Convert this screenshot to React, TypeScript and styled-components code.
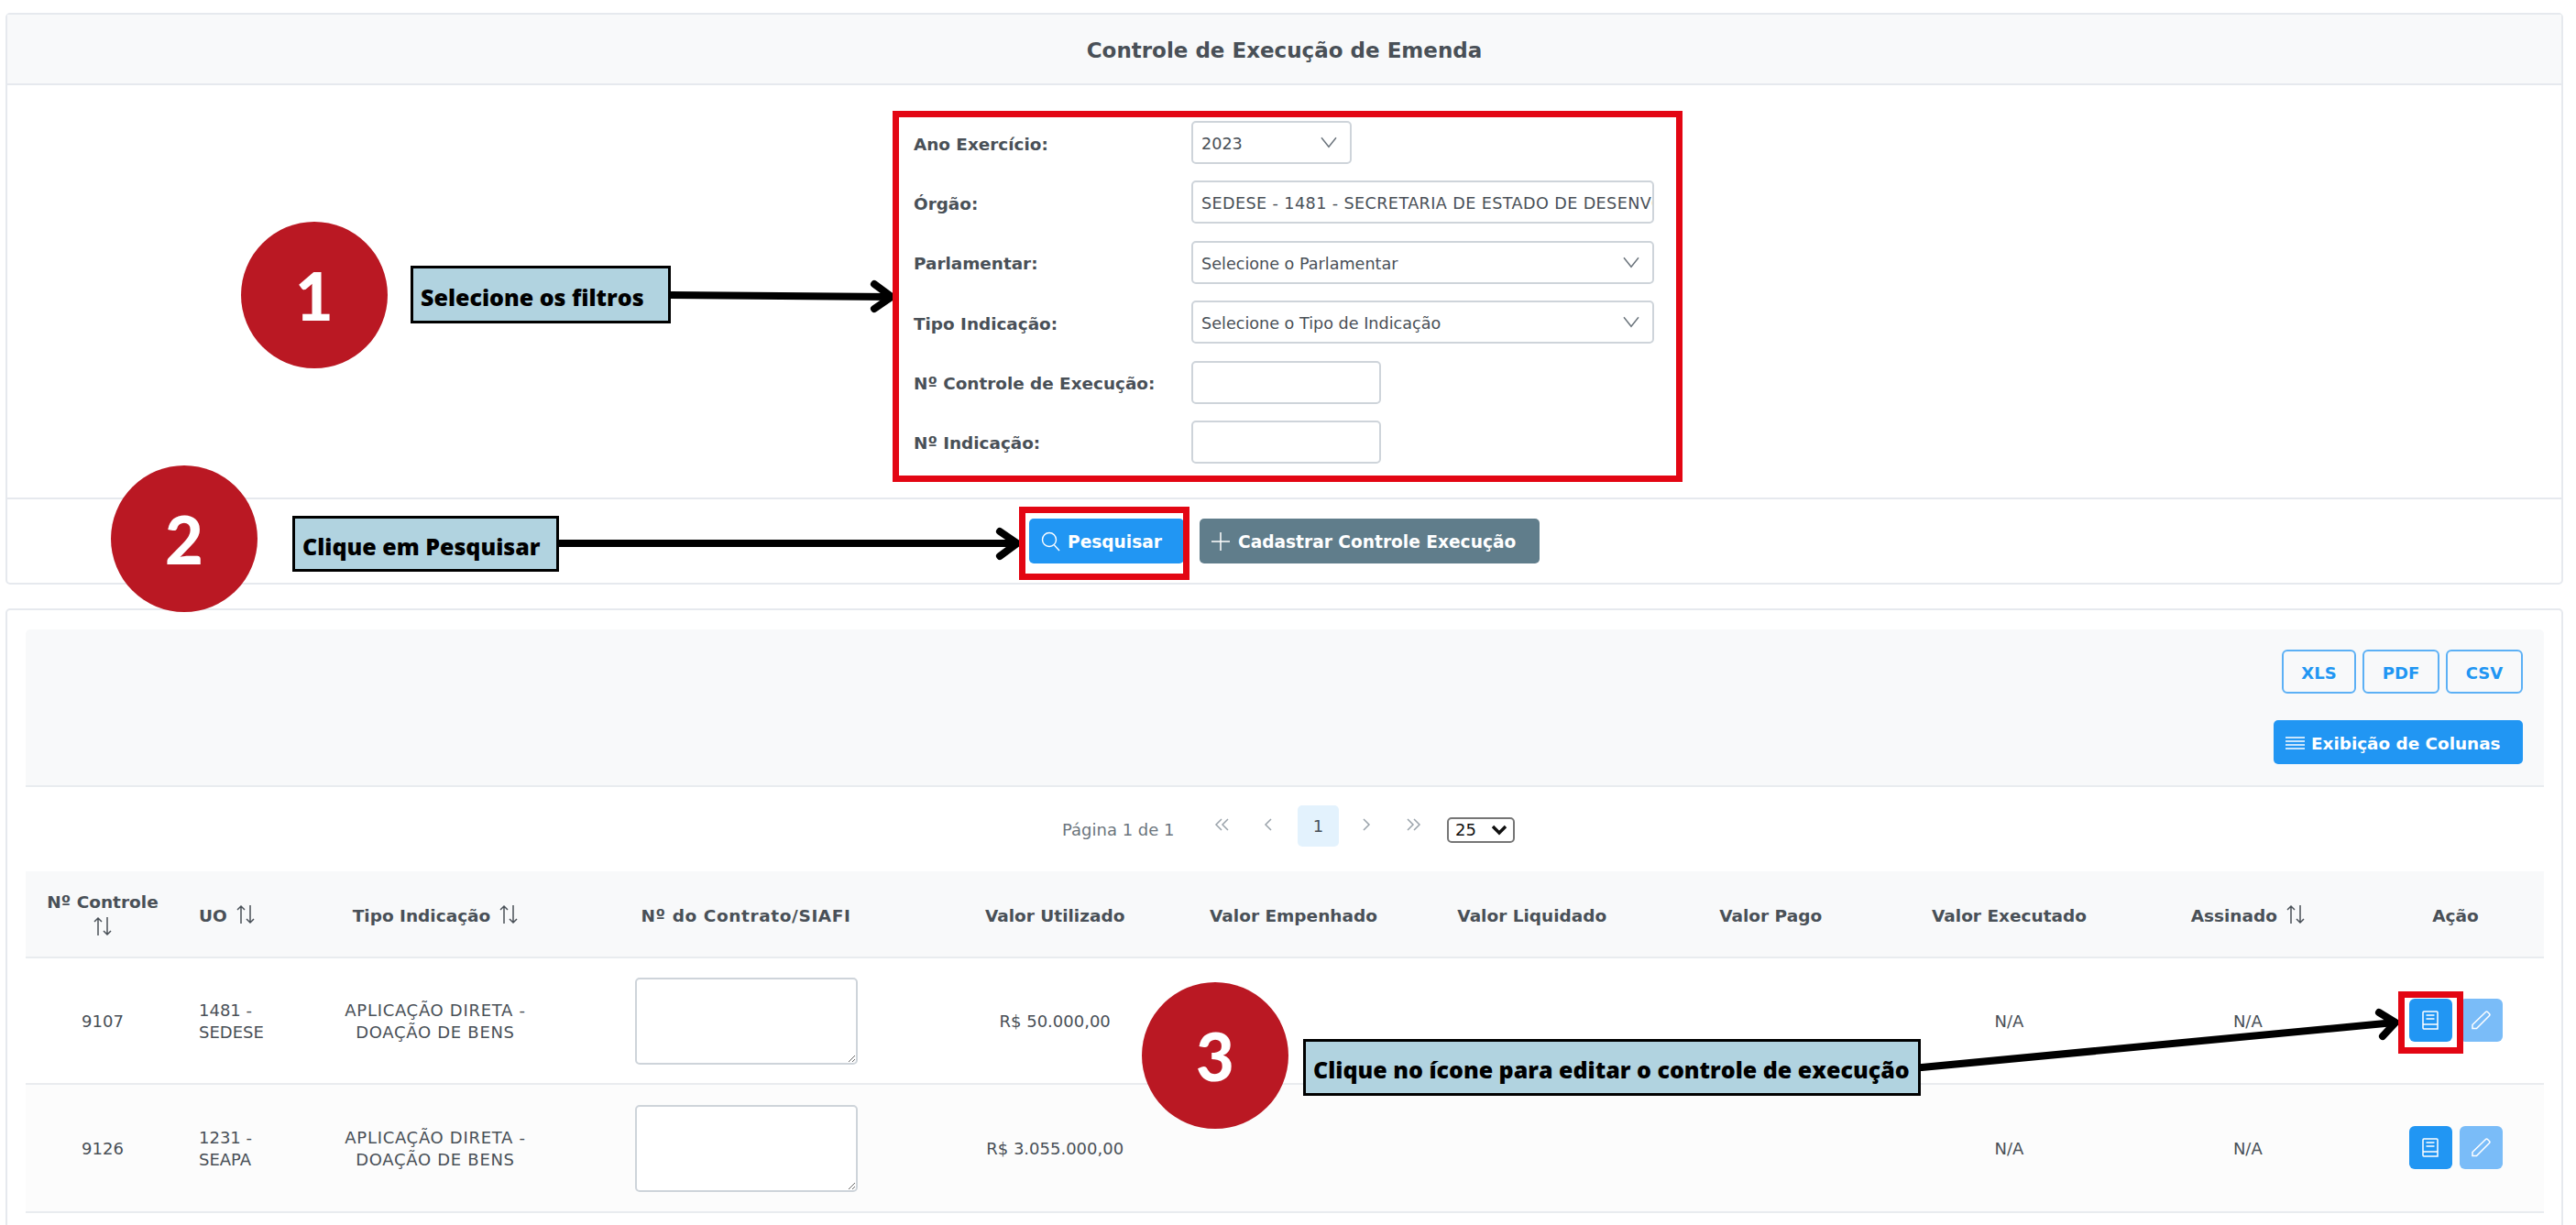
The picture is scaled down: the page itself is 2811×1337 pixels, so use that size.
import React from 'react'
import styled, { createGlobalStyle } from 'styled-components'

const GlobalStyle = createGlobalStyle`
  html, body { margin: 0; padding: 0; background: #fff; }
  * { box-sizing: border-box; }
`

const COLUMNS = '168px 147px 264px 414px repeat(6, 260.33px) 193px'
const UI_FONT = '"DejaVu Sans", Verdana, sans-serif'
const NOTE_FONT = '"Open Sans", "Liberation Sans", sans-serif'

const filters = [
  { label: 'Ano Exercício:', value: '2023', width: 175, chevron: true, wide: false },
  { label: 'Órgão:', value: 'SEDESE - 1481 - SECRETARIA DE ESTADO DE DESENVOLVIMENTO SOCIAL', width: 505, chevron: false, wide: true },
  { label: 'Parlamentar:', value: 'Selecione o Parlamentar', width: 505, chevron: true, wide: false },
  { label: 'Tipo Indicação:', value: 'Selecione o Tipo de Indicação', width: 505, chevron: true, wide: false },
  { label: 'Nº Controle de Execução:', value: '', width: 207, chevron: false, wide: false },
  { label: 'Nº Indicação:', value: '', width: 207, chevron: false, wide: false },
]

const rows = [
  { id: '9107', uo: ['1481 -', 'SEDESE'], valor: 'R$ 50.000,00', height: 138, striped: false },
  { id: '9126', uo: ['1231 -', 'SEAPA'], valor: 'R$ 3.055.000,00', height: 140, striped: true },
]

const ChevronDown = ({ size = 18 }: { size?: number }) => (
  <svg width={size} height={size * 0.7} viewBox="0 0 18 12" fill="none" stroke="#6c757d" strokeWidth="1.5">
    <path d="M1 1l8 10 8-10" />
  </svg>
)

const SearchIcon = () => (
  <svg width="21" height="22" viewBox="0 0 21 22" fill="none" stroke="#fff" strokeWidth="1.4">
    <circle cx="9" cy="9" r="7.5" />
    <path d="M14.5 15l5.5 6" />
  </svg>
)

const PlusIcon = () => (
  <svg width="22" height="22" viewBox="0 0 22 22" stroke="#fff" strokeWidth="1.5">
    <path d="M11 1v20M1 11h20" />
  </svg>
)

const BarsIcon = () => (
  <svg width="21" height="16" viewBox="0 0 21 16" stroke="#fff" strokeWidth="1.5">
    <path d="M0 2h21M0 6h21M0 10h21M0 14h21" />
  </svg>
)

const BookIcon = () => (
  <svg width="18" height="21" viewBox="0 0 18 21" fill="none" stroke="#fff" strokeWidth="1.5">
    <path d="M1 15V2q0-1 1-1h14q1 0 1 1v18H2q-1 0-1-1z" />
    <path d="M1 15h16M4.5 5h9M4.5 9h9" />
  </svg>
)

const PencilIcon = () => (
  <svg width="21" height="21" viewBox="0 0 21 21" fill="none" stroke="#fff" strokeWidth="1.5">
    <path d="M1 15.5L15.5 1.5q1-1 2 0l2 2q1 1 0 2L5.5 19.5H1z" />
  </svg>
)

const SortIcon = () => (
  <SortGlyph width="20" height="22" viewBox="0 0 20 22" fill="none" stroke="#495057" strokeWidth="1.5">
    <path d="M5 21V2M1 6l4-4 4 4M15 1v19M11 16l4 4 4-4" />
  </SortGlyph>
)

const PagerArrow = ({ d }: { d: string }) => (
  <svg width="20" height="14" viewBox="0 0 20 14" fill="none" stroke="#9aa3ab" strokeWidth="1.5">
    <path d={d} />
  </svg>
)

const App = () => {
  return (
    <Page>
      <GlobalStyle />

      <Card>
        <CardTitle>Controle de Execução de Emenda</CardTitle>
        <FilterGrid>
          {filters.map((f) => (
            <React.Fragment key={f.label}>
              <FilterLabel>{f.label}</FilterLabel>
              <Field $width={f.width}>
                <FieldText $wide={f.wide}>{f.value}</FieldText>
                {f.chevron && <ChevronDown />}
              </Field>
            </React.Fragment>
          ))}
        </FilterGrid>
        <CardFooter>
          <Button $bg="#2196f3" $width={169} $pad={13}><SearchIcon />Pesquisar</Button>
          <Button $bg="#607d8b" $width={371} $pad={12}><PlusIcon />Cadastrar Controle Execução</Button>
        </CardFooter>
      </Card>

      <TableCard>
        <Toolbar>
          <ExportRow>
            <OutlineButton $width={81}>XLS</OutlineButton>
            <OutlineButton $width={84}>PDF</OutlineButton>
            <OutlineButton $width={84}>CSV</OutlineButton>
          </ExportRow>
          <ColumnsButton><BarsIcon />Exibição de Colunas</ColumnsButton>
        </Toolbar>

        <Pager>
          <PageInfo>Página 1 de 1</PageInfo>
          <PagerIcon $width={50}><PagerArrow d="M9 1L3 7l6 6M16 1l-6 6 6 6" /></PagerIcon>
          <PagerIcon $width={50}><PagerArrow d="M13 1L7 7l6 6" /></PagerIcon>
          <PageCurrent>1</PageCurrent>
          <PagerIcon $width={60}><PagerArrow d="M7 1l6 6-6 6" /></PagerIcon>
          <PagerIcon $width={42}><PagerArrow d="M4 1l6 6-6 6M11 1l6 6-6 6" /></PagerIcon>
          <PageSize>25<ChevronBold width="18" height="12" viewBox="0 0 18 12" fill="none" stroke="#111" strokeWidth="3.4"><path d="M2 2l7 7 7-7" /></ChevronBold></PageSize>
        </Pager>

        <HeadRow>
          <HeadCell><span>Nº Controle</span><SortIcon /></HeadCell>
          <HeadCell $row $start><span>UO</span><SortIcon /></HeadCell>
          <HeadCell $row><span>Tipo Indicação</span><SortIcon /></HeadCell>
          <HeadCell $wide>Nº do Contrato/SIAFI</HeadCell>
          <HeadCell>Valor Utilizado</HeadCell>
          <HeadCell>Valor Empenhado</HeadCell>
          <HeadCell>Valor Liquidado</HeadCell>
          <HeadCell>Valor Pago</HeadCell>
          <HeadCell>Valor Executado</HeadCell>
          <HeadCell $row><span>Assinado</span><SortIcon /></HeadCell>
          <HeadCell>Ação</HeadCell>
        </HeadRow>

        {rows.map((r) => (
          <BodyRow key={r.id} $height={r.height} $striped={r.striped}>
            <Cell>{r.id}</Cell>
            <Cell $left>{r.uo[0]}<br />{r.uo[1]}</Cell>
            <Cell $wide>APLICAÇÃO DIRETA -<br />DOAÇÃO DE BENS</Cell>
            <AreaCell><ContractArea /></AreaCell>
            <Cell>{r.valor}</Cell>
            <Cell />
            <Cell />
            <Cell />
            <Cell>N/A</Cell>
            <Cell>N/A</Cell>
            <ActionCell>
              <ActionButton $muted={false}><BookIcon /></ActionButton>
              <ActionButton $muted><PencilIcon /></ActionButton>
            </ActionCell>
          </BodyRow>
        ))}
      </TableCard>

      {/* tutorial marks drawn over the screen */}
      <ArrowLayer width="2811" height="1337" viewBox="0 0 2811 1337" fill="none" stroke="#000" strokeLinecap="round" strokeLinejoin="round">
        <path strokeWidth="8" d="M732 322L972 324" />
        <path strokeWidth="8" d="M954 310L973 324 954 337" />
        <path strokeWidth="8" d="M610 593H1108" />
        <path strokeWidth="8" d="M1091 580L1110 593 1091 607" />
        <path strokeWidth="8" d="M2097 1165L2613 1116" />
        <path strokeWidth="8" d="M2596 1105L2614 1116 2600 1131" />
      </ArrowLayer>

      <RedFrame $x={974} $y={121} $w={862} $h={405} />
      <RedFrame $x={1112} $y={553} $w={186} $h={80} />
      <RedFrame $x={2617} $y={1082} $w={71} $h={68} />

      <StepBadge $x={263} $y={242}>1</StepBadge>
      <StepBadge $x={121} $y={508}>2</StepBadge>
      <StepBadge $x={1246} $y={1072}>3</StepBadge>

      <NoteBox $x={448} $y={290} $w={284} $h={63}>Selecione os filtros</NoteBox>
      <NoteBox $x={319} $y={563} $w={291} $h={61}>Clique em Pesquisar</NoteBox>
      <NoteBox $x={1422} $y={1134} $w={674} $h={62}>Clique no ícone para editar o controle de execução</NoteBox>
    </Page>
  )
}

export default App

const Page = styled.div`
  position: relative;
  width: 2811px;
  height: 1337px;
  overflow: hidden;
  padding: 14px 14px 0 6px;
  font-family: ${UI_FONT};
  color: #495057;
`
const Card = styled.section`
  height: 624px;
  border: 2px solid #e6e9ee;
  border-radius: 5px;
  display: flex;
  flex-direction: column;
`
const CardTitle = styled.h1`
  height: 77px;
  margin: 0;
  padding-top: 2px;
  flex: none;
  background: #f8f9fa;
  border-bottom: 2px solid #e6e9ee;
  display: flex;
  align-items: center;
  justify-content: center;
  font-size: 23px;
  font-weight: 700;
  color: #495057;
`
const FilterGrid = styled.div`
  flex: 1;
  display: grid;
  grid-template-columns: 303px 505px;
  grid-auto-rows: 47px;
  row-gap: 18.4px;
  justify-content: center;
  align-items: center;
  padding: 39px 1px 0 0;
`
const FilterLabel = styled.label`
  font-size: 18.4px;
  font-weight: 700;
  padding-top: 3px;
  color: #495057;
`
const Field = styled.div<{ $width: number }>`
  width: ${(p) => p.$width}px;
  height: 47px;
  border: 2px solid #ced4da;
  border-radius: 5px;
  background: #fff;
  display: flex;
  align-items: center;
  justify-content: space-between;
  padding: 0 14px 0 9px;
  gap: 8px;
  overflow: hidden;
`
const FieldText = styled.span<{ $wide: boolean }>`
  font-size: 17.6px;
  letter-spacing: ${(p) => (p.$wide ? '0.4px' : '0')};
  padding-top: 3px;
  color: #495057;
  white-space: nowrap;
  overflow: hidden;
  flex: 1;
  margin-right: -14px;
`
const CardFooter = styled.div`
  height: 93px;
  flex: none;
  border-top: 2px solid #e6e9ee;
  display: flex;
  align-items: center;
  justify-content: center;
  gap: 17px;
  padding-bottom: 1px;
`
const Button = styled.div<{ $bg: string; $width: number; $pad: number }>`
  width: ${(p) => p.$width}px;
  height: 49px;
  border-radius: 5px;
  background: ${(p) => p.$bg};
  color: #fff;
  font-size: 18.6px;
  font-weight: 700;
  display: flex;
  align-items: center;
  padding: 2px 0 0 ${(p) => p.$pad}px;
  gap: 8px;
  white-space: nowrap;
`
const TableCard = styled.section`
  margin-top: 26px;
  height: 700px;
  border: 2px solid #e6e9ee;
  border-radius: 5px;
  padding: 21px 19px 0 20px;
`
const Toolbar = styled.div`
  height: 172px;
  background: #f8f9fa;
  border-bottom: 2px solid #e9ecef;
  border-radius: 5px 5px 0 0;
  display: flex;
  flex-direction: column;
  align-items: flex-end;
  padding: 22px 23px 0 0;
  gap: 29px;
`
const ExportRow = styled.div`
  display: flex;
  gap: 7px;
`
const OutlineButton = styled.div<{ $width: number }>`
  width: ${(p) => p.$width}px;
  height: 48px;
  padding-top: 2px;
  border: 2px solid #5cb0f5;
  border-radius: 6px;
  color: #2196f3;
  font-size: 18px;
  font-weight: 700;
  display: flex;
  align-items: center;
  justify-content: center;
`
const ColumnsButton = styled.div`
  width: 272px;
  height: 48px;
  border-radius: 5px;
  background: #2196f3;
  color: #fff;
  font-size: 18.4px;
  font-weight: 700;
  display: flex;
  align-items: center;
  padding: 2px 0 0 13px;
  gap: 7px;
  white-space: nowrap;
`
const Pager = styled.div`
  height: 92px;
  display: flex;
  align-items: center;
  padding: 0 0 8px 1131px;
`
const PageInfo = styled.span`
  font-size: 18px;
  color: #6c757d;
  width: 150px;
  white-space: nowrap;
  padding-top: 9px;
`
const PagerIcon = styled.span<{ $width: number }>`
  width: ${(p) => p.$width}px;
  display: flex;
  justify-content: center;
  padding-bottom: 2px;
`
const PageCurrent = styled.span`
  width: 45px;
  height: 45px;
  margin-left: 7px;
  border-radius: 5px;
  background: #e3f2fd;
  color: #495057;
  font-size: 18px;
  display: flex;
  align-items: center;
  justify-content: center;
`
const PageSize = styled.span`
  width: 74px;
  height: 28px;
  margin: 9px 0 0 16px;
  border: 2px solid #767676;
  border-radius: 5px;
  color: #111;
  font-size: 18px;
  display: flex;
  align-items: center;
  justify-content: space-between;
  padding: 0 6px 0 7px;
`
const ChevronBold = styled.svg`
  flex: none;
`
const HeadRow = styled.div`
  display: grid;
  grid-template-columns: ${COLUMNS};
  height: 95px;
  background: #f8f9fa;
  border-bottom: 2px solid #e9ecef;
`
const HeadCell = styled.div<{ $row?: boolean; $start?: boolean; $wide?: boolean }>`
  display: flex;
  flex-direction: ${(p) => (p.$row ? 'row' : 'column')};
  align-items: center;
  justify-content: ${(p) => (p.$start ? 'flex-start' : 'center')};
  padding: ${(p) => (p.$start ? '4px 0 0 21px' : '4px 0 0')};
  gap: ${(p) => (p.$row ? '10px' : '5px')};
  font-size: 18.5px;
  letter-spacing: ${(p) => (p.$wide ? '0.6px' : '0')};
  font-weight: 700;
  text-align: center;
  color: #495057;
  white-space: nowrap;
`
const SortGlyph = styled.svg`
  flex: none;
  margin-bottom: 3px;
`
const BodyRow = styled.div<{ $height: number; $striped: boolean }>`
  display: grid;
  grid-template-columns: ${COLUMNS};
  height: ${(p) => p.$height}px;
  background: ${(p) => (p.$striped ? '#fcfcfc' : '#fff')};
  border-bottom: 2px solid #e9ecef;
`
const Cell = styled.div<{ $left?: boolean; $wide?: boolean }>`
  display: flex;
  align-items: center;
  justify-content: ${(p) => (p.$left ? 'flex-start' : 'center')};
  text-align: ${(p) => (p.$left ? 'left' : 'center')};
  padding: 2px 0 0 ${(p) => (p.$left ? '21px' : '0')};
  font-size: 18px;
  letter-spacing: ${(p) => (p.$wide ? '0.7px' : '0')};
  line-height: 24px;
  color: #495057;
`
const AreaCell = styled.div`
  display: flex;
  align-items: center;
  justify-content: center;
`
const ContractArea = styled.textarea`
  width: 243px;
  height: 95px;
  border: 2px solid #ced4da;
  border-radius: 5px;
  background: #fff;
  resize: both;
  outline: none;
`
const ActionCell = styled.div`
  display: flex;
  align-items: center;
  gap: 8px;
  padding: 0 0 2px 46px;
`
const ActionButton = styled.div<{ $muted: boolean }>`
  width: 47px;
  height: 47px;
  border-radius: 6px;
  background: ${(p) => (p.$muted ? '#7abcf8' : '#2196f3')};
  display: flex;
  align-items: center;
  justify-content: center;
`
const ArrowLayer = styled.svg`
  position: absolute;
  left: 0;
  top: 0;
  pointer-events: none;
`
const RedFrame = styled.div<{ $x: number; $y: number; $w: number; $h: number }>`
  position: absolute;
  left: ${(p) => p.$x}px;
  top: ${(p) => p.$y}px;
  width: ${(p) => p.$w}px;
  height: ${(p) => p.$h}px;
  border: 7px solid #e30613;
`
const StepBadge = styled.div<{ $x: number; $y: number }>`
  position: absolute;
  left: ${(p) => p.$x}px;
  top: ${(p) => p.$y}px;
  width: 160px;
  height: 160px;
  border-radius: 50%;
  background: #ba1823;
  color: #fff;
  font-family: Lato, "Liberation Sans", sans-serif;
  font-size: 72px;
  font-weight: 900;
  display: flex;
  align-items: center;
  justify-content: center;
`
const NoteBox = styled.div<{ $x: number; $y: number; $w: number; $h: number }>`
  position: absolute;
  left: ${(p) => p.$x}px;
  top: ${(p) => p.$y}px;
  width: ${(p) => p.$w}px;
  height: ${(p) => p.$h}px;
  border: 3px solid #000;
  background: #b1d3e0;
  color: #000;
  font-family: ${NOTE_FONT};
  font-size: 25px;
  font-weight: 800;
  display: flex;
  align-items: center;
  padding: 4px 0 0 8px;
  white-space: nowrap;
`
